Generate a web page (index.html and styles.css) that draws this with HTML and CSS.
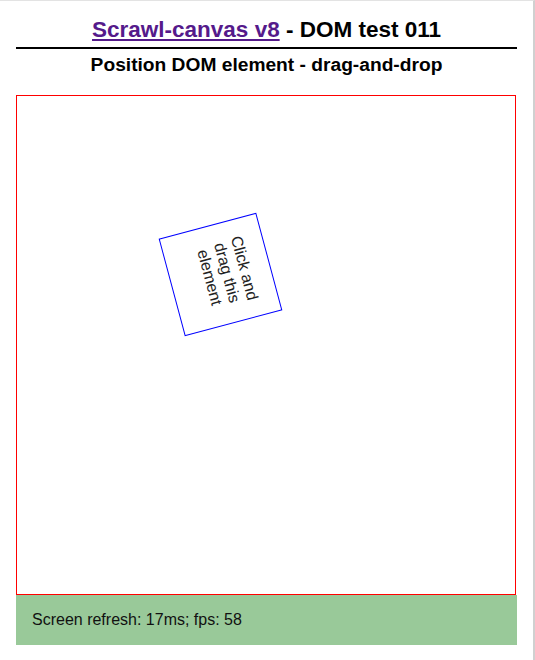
FILE: index.html
```html
<!DOCTYPE html>
<html lang="en">
<head>
<meta charset="utf-8">
<title>Scrawl-canvas v8 - DOM test 011</title>
<link rel="stylesheet" href="styles.css">
</head>
<body>
<h1 class="title"><a class="home" href="#">Scrawl-canvas v8</a> - DOM test 011</h1>
<h2 class="subtitle">Position DOM element - drag-and-drop</h2>
<div class="stage">
  <div class="dragme">Click and drag this element</div>
</div>
<div class="report">Screen refresh: 17ms; fps: 58</div>
</body>
</html>
```
FILE: styles.css
```css
html {
  border-top: 1px solid #e3e3e3;
  border-right: 2px solid #d0d0d0;
  min-height: 100%;
  box-sizing: border-box;
  background: #fff;
}
body {
  margin: 0 16px;
  font-family: "Liberation Sans", Arial, sans-serif;
  color: #000;
}
.title {
  font-size: 22.5px;
  line-height: 26px;
  font-weight: bold;
  margin: 16px 0 0;
  padding-bottom: 4px;
  border-bottom: 2px solid #000;
  text-align: center;
}
.home {
  color: #551a8b;
  text-decoration: underline;
}
.subtitle {
  font-size: 19.2px;
  line-height: 22px;
  font-weight: bold;
  margin: 5px 0 0;
  text-align: center;
}
.stage {
  position: relative;
  margin-top: 19px;
  width: 500px;
  height: 500px;
  box-sizing: border-box;
  border: 1px solid #ff0000;
  overflow: hidden;
}
.dragme {
  position: absolute;
  left: 153px;
  top: 128px;
  width: 101px;
  height: 101px;
  box-sizing: border-box;
  border: 1px solid #0000ff;
  padding-top: 16px;
  font-size: 16px;
  line-height: 18px;
  text-align: center;
  color: #222;
  transform: rotate(75deg);
}
.report {
  background: #99c999;
  padding: 16px;
  font-size: 16px;
  line-height: 18px;
  color: #111;
}
```
